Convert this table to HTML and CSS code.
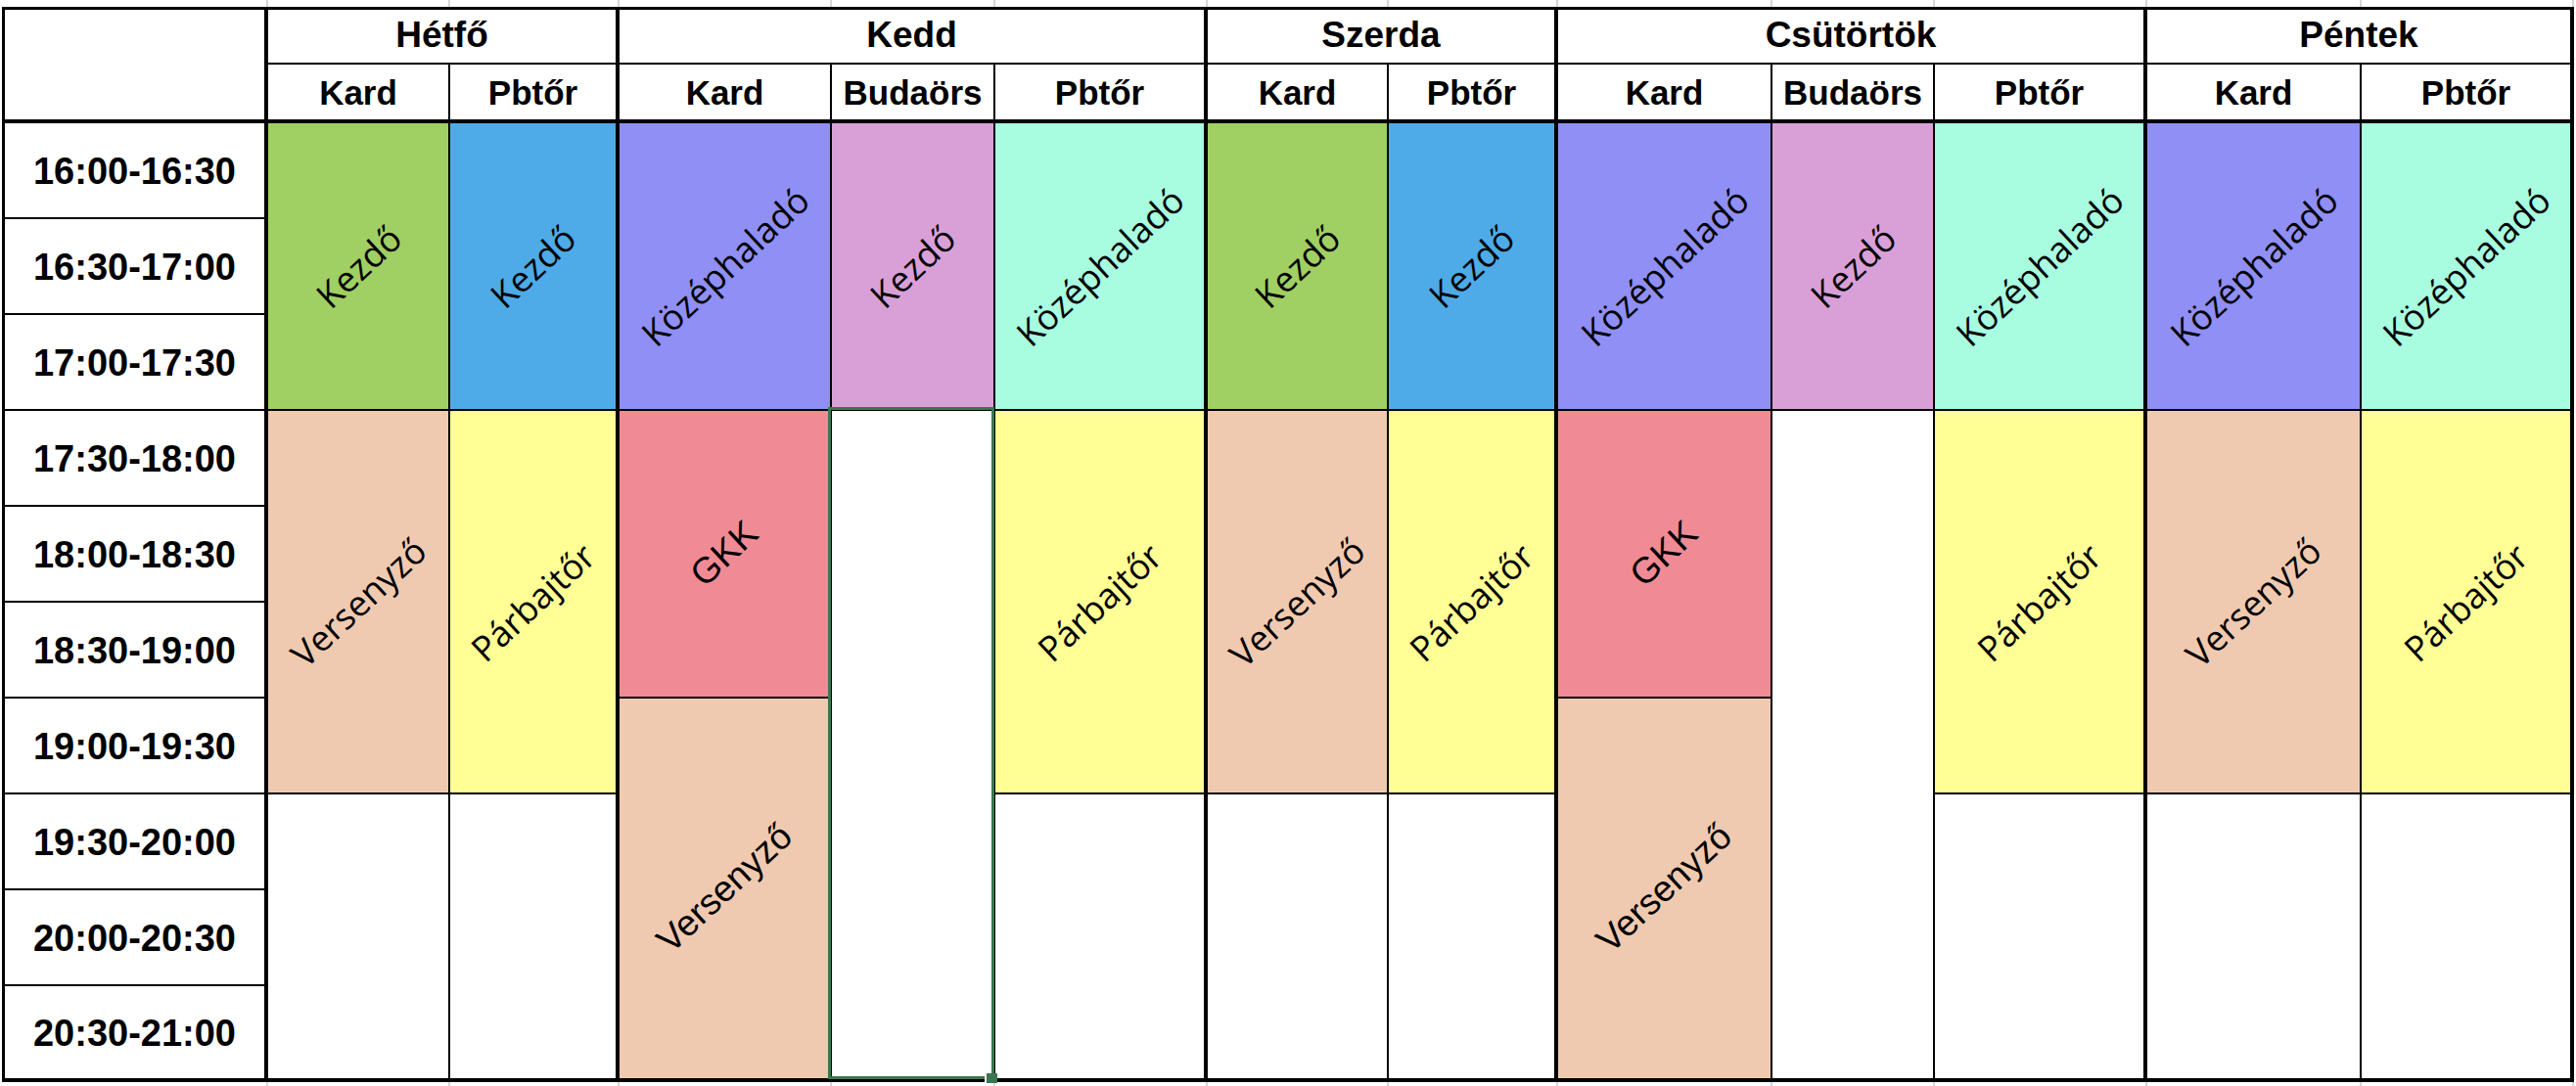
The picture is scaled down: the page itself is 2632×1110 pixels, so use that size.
FILE: index.html
```html
<!DOCTYPE html>
<html lang="hu">
<head>
<meta charset="utf-8">
<title>Órarend</title>
<link rel="stylesheet" href="styles.css">
</head>
<body>
<div class="page">
  <div class="gridstrip top">
    <div class="gs w0"></div><div class="gs w1"></div><div class="gs w2"></div><div class="gs w3"></div><div class="gs w4"></div><div class="gs w5"></div><div class="gs w6"></div><div class="gs w7"></div><div class="gs w8"></div><div class="gs w9"></div><div class="gs w10"></div><div class="gs w11"></div><div class="gs w12"></div>
  </div>
  <div class="sheet">
    <div class="head">
      <div class="corner"></div>
      <div class="day span2">Hétfő</div>
      <div class="day span3">Kedd</div>
      <div class="day span2">Szerda</div>
      <div class="day span3">Csütörtök</div>
      <div class="day span2">Péntek</div>
      <div class="sub">Kard</div>
      <div class="sub end">Pbtőr</div>
      <div class="sub">Kard</div>
      <div class="sub">Budaörs</div>
      <div class="sub end">Pbtőr</div>
      <div class="sub">Kard</div>
      <div class="sub end">Pbtőr</div>
      <div class="sub">Kard</div>
      <div class="sub">Budaörs</div>
      <div class="sub end">Pbtőr</div>
      <div class="sub">Kard</div>
      <div class="sub end">Pbtőr</div>
    </div>
    <div class="body">
      <div class="col w0 end">
        <div class="t">16:00-16:30</div>
        <div class="t">16:30-17:00</div>
        <div class="t">17:00-17:30</div>
        <div class="t">17:30-18:00</div>
        <div class="t">18:00-18:30</div>
        <div class="t">18:30-19:00</div>
        <div class="t">19:00-19:30</div>
        <div class="t">19:30-20:00</div>
        <div class="t">20:00-20:30</div>
        <div class="t fill">20:30-21:00</div>
      </div>
      <!-- Hétfő -->
      <div class="col w1">
        <div class="blk b3 green"><span class="lbl">Kezdő</span></div>
        <div class="blk b4 peach"><span class="lbl">Versenyző</span></div>
        <div class="blk fill"></div>
      </div>
      <div class="col w2 end">
        <div class="blk b3 blue"><span class="lbl">Kezdő</span></div>
        <div class="blk b4 yellow"><span class="lbl">Párbajtőr</span></div>
        <div class="blk fill"></div>
      </div>
      <!-- Kedd -->
      <div class="col w3">
        <div class="blk b3 purple"><span class="lbl">Középhaladó</span></div>
        <div class="blk b3 rose"><span class="lbl arial">GKK</span></div>
        <div class="blk fill peach"><span class="lbl arial">Versenyző</span></div>
      </div>
      <div class="col w4">
        <div class="blk b3 lilac"><span class="lbl">Kezdő</span></div>
        <div class="blk fill selected"></div>
      </div>
      <div class="col w5 end">
        <div class="blk b3 mint"><span class="lbl">Középhaladó</span></div>
        <div class="blk b4 yellow"><span class="lbl">Párbajtőr</span></div>
        <div class="blk fill"></div>
      </div>
      <!-- Szerda -->
      <div class="col w6">
        <div class="blk b3 green"><span class="lbl">Kezdő</span></div>
        <div class="blk b4 peach"><span class="lbl">Versenyző</span></div>
        <div class="blk fill"></div>
      </div>
      <div class="col w7 end">
        <div class="blk b3 blue"><span class="lbl">Kezdő</span></div>
        <div class="blk b4 yellow"><span class="lbl">Párbajtőr</span></div>
        <div class="blk fill"></div>
      </div>
      <!-- Csütörtök -->
      <div class="col w8">
        <div class="blk b3 purple"><span class="lbl">Középhaladó</span></div>
        <div class="blk b3 rose"><span class="lbl arial">GKK</span></div>
        <div class="blk fill peach"><span class="lbl arial">Versenyző</span></div>
      </div>
      <div class="col w9">
        <div class="blk b3 lilac"><span class="lbl">Kezdő</span></div>
        <div class="blk fill"></div>
      </div>
      <div class="col w10 end">
        <div class="blk b3 mint"><span class="lbl">Középhaladó</span></div>
        <div class="blk b4 yellow"><span class="lbl">Párbajtőr</span></div>
        <div class="blk fill"></div>
      </div>
      <!-- Péntek -->
      <div class="col w11">
        <div class="blk b3 purple"><span class="lbl">Középhaladó</span></div>
        <div class="blk b4 peach"><span class="lbl">Versenyző</span></div>
        <div class="blk fill"></div>
      </div>
      <div class="col w12 end">
        <div class="blk b3 mint"><span class="lbl">Középhaladó</span></div>
        <div class="blk b4 yellow"><span class="lbl">Párbajtőr</span></div>
        <div class="blk fill"></div>
      </div>
    </div>
  </div>
  <div class="gridstrip bottom">
    <div class="gs w0"></div><div class="gs w1"></div><div class="gs w2"></div><div class="gs w3"></div><div class="gs w4"></div><div class="gs w5"></div><div class="gs w6"></div><div class="gs w7"></div><div class="gs w8"></div><div class="gs w9"></div><div class="gs w10"></div><div class="gs w11"></div><div class="gs w12"></div>
  </div>
</div>
</body>
</html>
```
FILE: styles.css
```css
* { box-sizing: border-box; }

html, body {
  margin: 0;
  padding: 0;
  background: #ffffff;
  overflow: hidden;
}

body {
  font-family: "Liberation Sans", Arial, sans-serif;
  color: #000;
}

.page {
  width: 2632px;
  height: 1110px;
  padding-left: 2px;
}

/* spreadsheet gridlines outside the table */
.gridstrip {
  display: flex;
  padding-left: 3px;
}
.gridstrip.top { height: 7px; }
.gridstrip.bottom { height: 4px; }
.gs { border-right: 2px solid #d6d6d6; height: 100%; }

/* column widths (border-box, including right border) */
.w0 { width: 269px; }
.w1 { width: 186px; }
.w2 { width: 173px; }
.w3 { width: 217px; }
.w4 { width: 167px; }
.w5 { width: 217px; }
.w6 { width: 185px; }
.w7 { width: 173px; }
.w8 { width: 219px; }
.w9 { width: 166px; }
.w10 { width: 217px; }
.w11 { width: 219px; }
.w12 { width: 217px; }

.sheet {
  width: 2628px;
  border-left: 3px solid #000;
  border-top: 3px solid #000;
}

/* header */
.head {
  display: grid;
  grid-template-columns: 269px 186px 173px 217px 167px 217px 185px 173px 219px 166px 217px 219px 217px;
  grid-template-rows: 56px 60px;
}

.corner {
  grid-row: 1 / span 2;
  border-right: 4px solid #000;
  border-bottom: 4px solid #000;
}

.day, .sub {
  display: flex;
  align-items: center;
  justify-content: center;
  font-weight: bold;
  white-space: nowrap;
}

.day {
  font-size: 37px;
  border-right: 4px solid #000;
  border-bottom: 2px solid #000;
  padding-bottom: 2px;
}
.span2 { grid-column: span 2; }
.span3 { grid-column: span 3; }

.sub {
  font-size: 35px;
  border-right: 2px solid #000;
  border-bottom: 4px solid #000;
  padding-top: 2px;
}
.sub.end { border-right-width: 4px; }

/* body */
.body {
  display: flex;
  height: 980px;
  border-bottom: 4px solid #000;
}

.col {
  display: flex;
  flex-direction: column;
  height: 100%;
  border-right: 2px solid #000;
}
.col.end { border-right-width: 4px; }

.t {
  height: 98px;
  flex: none;
  display: flex;
  align-items: center;
  justify-content: center;
  font-weight: bold;
  font-size: 38px;
  border-bottom: 2px solid #000;
  white-space: nowrap;
  padding-top: 2px;
}

.blk {
  flex: none;
  display: flex;
  align-items: center;
  justify-content: center;
  border-bottom: 2px solid #000;
  overflow: visible;
}
.b3 { height: 294px; }
.b4 { height: 392px; }

.fill {
  flex: 1 1 auto;
  border-bottom: 0;
}
.t.fill { height: auto; }

.lbl {
  display: inline-block;
  font-family: "Open Sans", "Noto Sans", sans-serif;
  font-size: 36px;
  white-space: nowrap;
  transform: rotate(-43deg);
}
.lbl.arial {
  font-family: "Liberation Sans", Arial, sans-serif;
  font-size: 37px;
}

.green  { background: #a0cf63; }
.blue   { background: #4eabe8; }
.purple { background: #8f8ff6; }
.lilac  { background: #d9a0d8; }
.mint   { background: #a8fce0; }
.peach  { background: #f0cab0; }
.yellow { background: #ffff96; }
.rose   { background: #f08b95; }

/* Excel active-cell selection */
.selected { position: relative; }
.selected::after {
  content: "";
  position: absolute;
  top: -4px;
  left: -4px;
  right: -1px;
  bottom: -1px;
  border: 3px solid #3c7650;
  pointer-events: none;
}
.selected::before {
  content: "";
  position: absolute;
  right: -4px;
  bottom: -5px;
  width: 11px;
  height: 10px;
  background: #3c7650;
  border-left: 2px solid #fff;
  z-index: 2;
}
```
